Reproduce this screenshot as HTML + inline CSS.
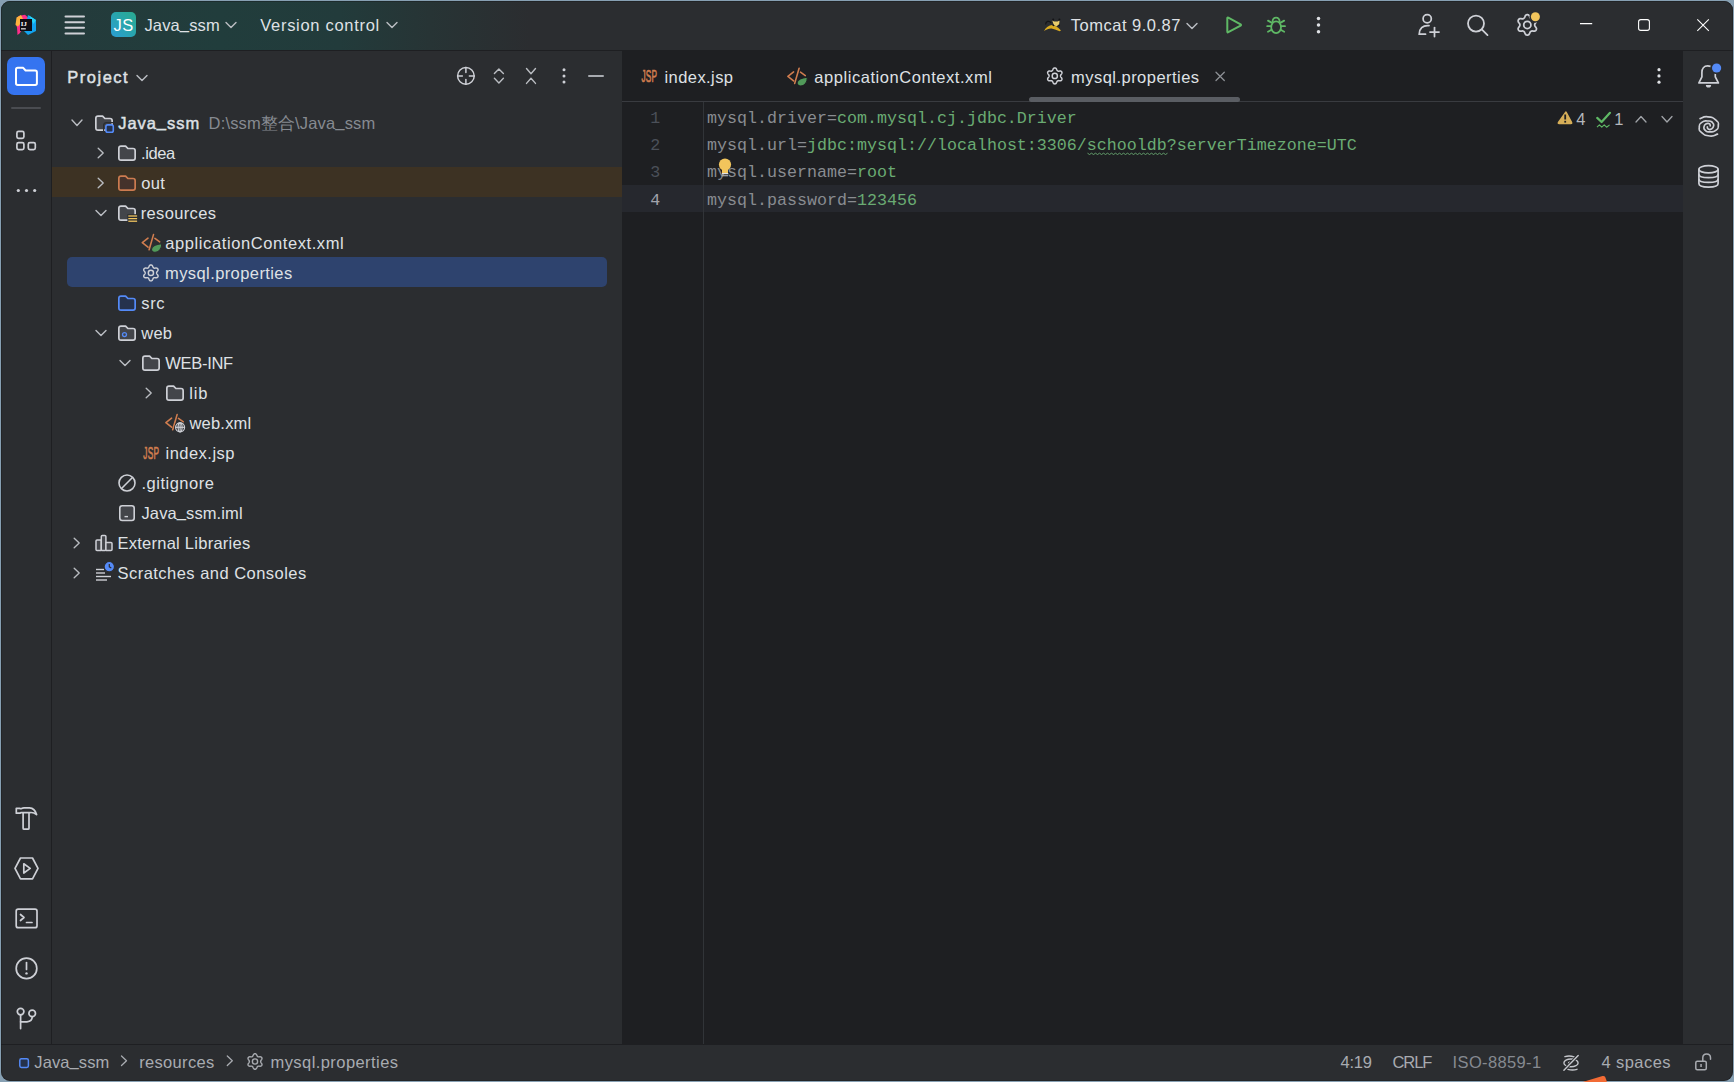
<!DOCTYPE html>
<html><head><meta charset="utf-8">
<style>
*{box-sizing:border-box}
html,body{margin:0;padding:0}
body{width:1734px;height:1082px;overflow:hidden;position:relative;background:#87a0b3;font-family:"Liberation Sans",sans-serif;color:#dfe1e5}
.a{position:absolute}
#win{position:absolute;left:0;top:0;width:1734px;height:1082px;clip-path:inset(1px 1px 1px 1px round 9px);background:#2b2d30}
.t{position:absolute;white-space:pre}
#ov{position:absolute;left:0;top:0}
</style></head>
<body>
<div id="win">
<div class="a" style="left:0;top:0;width:1734px;height:50px;background:linear-gradient(90deg,#253a3b 0px,#213d3c 220px,#223b3b 340px,#273435 430px,#2b2d30 530px)"></div>
<div class="a" style="left:0px;top:50px;width:1734px;height:1px;background:#1e1f22;border-radius:0px;"></div>
<div class="a" style="left:51px;top:51px;width:1px;height:993px;background:#1e1f22;border-radius:0px;"></div>
<div class="a" style="left:622px;top:51px;width:1061px;height:993px;background:#1e1f22;border-radius:0px;"></div>
<div class="a" style="left:0px;top:1044px;width:1734px;height:1px;background:#1e1f22;border-radius:0px;"></div>
<div class="a" style="left:111px;top:12px;width:25px;height:25px;border-radius:5px;background:linear-gradient(45deg,#2b9ed6 0%,#28a6a8 60%,#2aa98f 100%)"></div>
<div class="t" style="left:113.60px;top:14.28px;font-size:16.5px;line-height:22px;color:#ffffff;letter-spacing:0.3px;font-weight:normal;font-family:'Liberation Sans',sans-serif;">JS</div>
<div class="t" style="left:144.50px;top:14.28px;font-size:16.5px;line-height:22px;color:#dfe1e5;letter-spacing:0.12px;font-weight:normal;font-family:'Liberation Sans',sans-serif;">Java<span style="position:relative;top:-1.8px">_</span>ssm</div>
<div class="t" style="left:260.30px;top:14.28px;font-size:16.5px;line-height:22px;color:#dfe1e5;letter-spacing:0.7px;font-weight:normal;font-family:'Liberation Sans',sans-serif;">Version control</div>
<div class="t" style="left:1070.80px;top:14.28px;font-size:16.5px;line-height:22px;color:#dfe1e5;letter-spacing:0.5px;font-weight:normal;font-family:'Liberation Sans',sans-serif;">Tomcat 9.0.87</div>
<div class="a" style="left:7px;top:57px;width:38px;height:38px;background:#3574f0;border-radius:7px;"></div>
<div class="a" style="left:11px;top:107px;width:30px;height:2px;background:#4a4c51;border-radius:1px;"></div>
<div class="t" style="left:67.30px;top:65.68px;font-size:16.5px;line-height:22px;color:#dfe1e5;letter-spacing:1.5px;font-weight:normal;font-family:'Liberation Sans',sans-serif;-webkit-text-stroke:0.45px #dfe1e5;">Project</div>
<div class="a" style="left:588px;top:75px;width:16px;height:2px;background:#a8abb0;border-radius:1px;"></div>
<div class="a" style="left:52px;top:167px;width:570px;height:30px;background:#3d3223;border-radius:0px;"></div>
<div class="a" style="left:67px;top:257.4px;width:540px;height:30px;background:#2e436e;border-radius:5px;"></div>
<div class="t" style="left:118.20px;top:112.28px;font-size:16.5px;line-height:22px;color:#dfe1e5;letter-spacing:0.95px;font-weight:normal;font-family:'Liberation Sans',sans-serif;-webkit-text-stroke:0.45px #dfe1e5;">Java<span style="position:relative;top:-1.8px">_</span>ssm</div>
<div class="t" style="left:208.60px;top:112.28px;font-size:16.5px;line-height:22px;color:#868a91;letter-spacing:0.15px;font-weight:normal;font-family:'Liberation Sans',sans-serif;">D:\ssm整合\Java<span style="position:relative;top:-1.8px">_</span>ssm</div>
<div class="t" style="left:141.10px;top:142.28px;font-size:16.5px;line-height:22px;color:#dfe1e5;letter-spacing:-0.45px;font-weight:normal;font-family:'Liberation Sans',sans-serif;">.idea</div>
<div class="t" style="left:141.30px;top:172.28px;font-size:16.5px;line-height:22px;color:#dfe1e5;letter-spacing:0.3px;font-weight:normal;font-family:'Liberation Sans',sans-serif;">out</div>
<div class="t" style="left:140.70px;top:202.28px;font-size:16.5px;line-height:22px;color:#dfe1e5;letter-spacing:0.36px;font-weight:normal;font-family:'Liberation Sans',sans-serif;">resources</div>
<div class="t" style="left:165.30px;top:232.28px;font-size:16.5px;line-height:22px;color:#dfe1e5;letter-spacing:0.59px;font-weight:normal;font-family:'Liberation Sans',sans-serif;">applicationContext.xml</div>
<div class="t" style="left:165.00px;top:262.28px;font-size:16.5px;line-height:22px;color:#dfe1e5;letter-spacing:0.41px;font-weight:normal;font-family:'Liberation Sans',sans-serif;">mysql.properties</div>
<div class="t" style="left:141.30px;top:292.28px;font-size:16.5px;line-height:22px;color:#dfe1e5;letter-spacing:0.6px;font-weight:normal;font-family:'Liberation Sans',sans-serif;">src</div>
<div class="t" style="left:141.30px;top:322.28px;font-size:16.5px;line-height:22px;color:#dfe1e5;letter-spacing:0.2px;font-weight:normal;font-family:'Liberation Sans',sans-serif;">web</div>
<div class="t" style="left:165.30px;top:352.28px;font-size:16.5px;line-height:22px;color:#dfe1e5;letter-spacing:-0.3px;font-weight:normal;font-family:'Liberation Sans',sans-serif;">WEB-INF</div>
<div class="t" style="left:189.30px;top:382.28px;font-size:16.5px;line-height:22px;color:#dfe1e5;letter-spacing:0.8px;font-weight:normal;font-family:'Liberation Sans',sans-serif;">lib</div>
<div class="t" style="left:189.50px;top:412.28px;font-size:16.5px;line-height:22px;color:#dfe1e5;letter-spacing:0.2px;font-weight:normal;font-family:'Liberation Sans',sans-serif;">web.xml</div>
<div class="t" style="left:165.50px;top:442.28px;font-size:16.5px;line-height:22px;color:#dfe1e5;letter-spacing:0.48px;font-weight:normal;font-family:'Liberation Sans',sans-serif;">index.jsp</div>
<div class="t" style="left:141.50px;top:472.28px;font-size:16.5px;line-height:22px;color:#dfe1e5;letter-spacing:0.5px;font-weight:normal;font-family:'Liberation Sans',sans-serif;">.gitignore</div>
<div class="t" style="left:141.50px;top:502.28px;font-size:16.5px;line-height:22px;color:#dfe1e5;letter-spacing:0.1px;font-weight:normal;font-family:'Liberation Sans',sans-serif;">Java<span style="position:relative;top:-1.8px">_</span>ssm.iml</div>
<div class="t" style="left:117.50px;top:532.28px;font-size:16.5px;line-height:22px;color:#dfe1e5;letter-spacing:0.25px;font-weight:normal;font-family:'Liberation Sans',sans-serif;">External Libraries</div>
<div class="t" style="left:117.50px;top:562.28px;font-size:16.5px;line-height:22px;color:#dfe1e5;letter-spacing:0.47px;font-weight:normal;font-family:'Liberation Sans',sans-serif;">Scratches and Consoles</div>
<div class="a" style="left:622px;top:101px;width:1061px;height:1px;background:#393b40;border-radius:0px;"></div>
<div class="t" style="left:664.50px;top:65.88px;font-size:16.5px;line-height:22px;color:#dfe1e5;letter-spacing:0.42px;font-weight:normal;font-family:'Liberation Sans',sans-serif;">index.jsp</div>
<div class="t" style="left:814.30px;top:65.88px;font-size:16.5px;line-height:22px;color:#dfe1e5;letter-spacing:0.55px;font-weight:normal;font-family:'Liberation Sans',sans-serif;">applicationContext.xml</div>
<div class="t" style="left:1071.00px;top:65.88px;font-size:16.5px;line-height:22px;color:#dfe1e5;letter-spacing:0.47px;font-weight:normal;font-family:'Liberation Sans',sans-serif;">mysql.properties</div>
<div class="a" style="left:1029px;top:97px;width:211px;height:5px;background:#5a5d63;border-radius:2.5px;"></div>
<div class="a" style="left:622px;top:185px;width:1061px;height:27px;background:#26282e;border-radius:0px;"></div>
<div class="a" style="left:703px;top:102px;width:1px;height:942px;background:#313438;border-radius:0px;"></div>
<div class="t" style="left:650.20px;top:107.96px;font-size:16.667px;line-height:22px;color:#4b5059;letter-spacing:0px;font-weight:normal;font-family:'Liberation Mono',monospace;">1</div>
<div class="t" style="left:650.20px;top:134.96px;font-size:16.667px;line-height:22px;color:#4b5059;letter-spacing:0px;font-weight:normal;font-family:'Liberation Mono',monospace;">2</div>
<div class="t" style="left:650.20px;top:162.46px;font-size:16.667px;line-height:22px;color:#4b5059;letter-spacing:0px;font-weight:normal;font-family:'Liberation Mono',monospace;">3</div>
<div class="t" style="left:650.20px;top:189.96px;font-size:16.667px;line-height:22px;color:#a1a3ab;letter-spacing:0px;font-weight:normal;font-family:'Liberation Mono',monospace;">4</div>
<div class="t" style="left:707.00px;top:107.96px;font-size:16.667px;line-height:22px;color:#dfe1e5;letter-spacing:0px;font-weight:normal;font-family:'Liberation Mono',monospace;"><span style="color:#898c91">mysql.driver=</span><span style="color:#6aab73">com.mysql.cj.jdbc.Driver</span></div>
<div class="t" style="left:707.00px;top:134.96px;font-size:16.667px;line-height:22px;color:#dfe1e5;letter-spacing:0px;font-weight:normal;font-family:'Liberation Mono',monospace;"><span style="color:#898c91">mysql.url=</span><span style="color:#6aab73">jdbc:mysql://localhost:3306/schooldb?serverTimezone=UTC</span></div>
<div class="t" style="left:707.00px;top:162.46px;font-size:16.667px;line-height:22px;color:#dfe1e5;letter-spacing:0px;font-weight:normal;font-family:'Liberation Mono',monospace;"><span style="color:#898c91">mysql.username=</span><span style="color:#6aab73">root</span></div>
<div class="t" style="left:707.00px;top:189.96px;font-size:16.667px;line-height:22px;color:#dfe1e5;letter-spacing:0px;font-weight:normal;font-family:'Liberation Mono',monospace;"><span style="color:#898c91">mysql.password=</span><span style="color:#6aab73">123456</span></div>
<div class="t" style="left:1576.20px;top:108.28px;font-size:16.5px;line-height:22px;color:#b4b7bc;letter-spacing:0px;font-weight:normal;font-family:'Liberation Sans',sans-serif;">4</div>
<div class="t" style="left:1614.20px;top:108.28px;font-size:16.5px;line-height:22px;color:#b4b7bc;letter-spacing:0px;font-weight:normal;font-family:'Liberation Sans',sans-serif;">1</div>
<div class="t" style="left:34.30px;top:1050.88px;font-size:16.5px;line-height:22px;color:#a8abb0;letter-spacing:0.1px;font-weight:normal;font-family:'Liberation Sans',sans-serif;">Java<span style="position:relative;top:-1.8px">_</span>ssm</div>
<div class="t" style="left:139.20px;top:1050.88px;font-size:16.5px;line-height:22px;color:#a8abb0;letter-spacing:0.32px;font-weight:normal;font-family:'Liberation Sans',sans-serif;">resources</div>
<div class="t" style="left:270.50px;top:1050.88px;font-size:16.5px;line-height:22px;color:#a8abb0;letter-spacing:0.43px;font-weight:normal;font-family:'Liberation Sans',sans-serif;">mysql.properties</div>
<div class="t" style="left:1340.50px;top:1050.88px;font-size:16.5px;line-height:22px;color:#a8abb0;letter-spacing:-0.2px;font-weight:normal;font-family:'Liberation Sans',sans-serif;">4:19</div>
<div class="t" style="left:1392.50px;top:1050.88px;font-size:16.5px;line-height:22px;color:#a8abb0;letter-spacing:-1.1px;font-weight:normal;font-family:'Liberation Sans',sans-serif;">CRLF</div>
<div class="t" style="left:1452.60px;top:1050.88px;font-size:16.5px;line-height:22px;color:#868a91;letter-spacing:0.36px;font-weight:normal;font-family:'Liberation Sans',sans-serif;">ISO-8859-1</div>
<div class="t" style="left:1601.50px;top:1050.88px;font-size:16.5px;line-height:22px;color:#a8abb0;letter-spacing:0.42px;font-weight:normal;font-family:'Liberation Sans',sans-serif;">4 spaces</div>
<svg id="ov" width="1734" height="1082" viewBox="0 0 1734 1082">
<g>
 <polygon points="18.5,16 25,14.8 29,18.5 24,27 19.5,33.5 17.5,35 17,27.5 15.8,23.5" fill="#fe2e88"/>
 <polygon points="16.5,17.5 21,15 23.5,20 18,26.5 15.5,25" fill="#ffb23e"/>
 <polygon points="28,15 36,20 36,31 28,35 24,31" fill="#12a4f0"/>
 <polygon points="29,15.5 36,20 33.5,24" fill="#26d3f7"/>
 <rect x="20" y="19" width="12" height="12" fill="#0f0d14"/>
 <text x="20.8" y="25.6" font-family="Liberation Serif" font-weight="bold" font-size="6.8" fill="#ffffff">IJ</text>
 <rect x="21" y="28.3" width="4.8" height="1.1" fill="#ffffff"/>
</g>
<g stroke="#ced0d6" stroke-width="2" stroke-linecap="round"><line x1="65.5" y1="16.6" x2="84" y2="16.6"/><line x1="65.5" y1="22.2" x2="84" y2="22.2"/><line x1="65.5" y1="27.8" x2="84" y2="27.8"/><line x1="65.5" y1="33.5" x2="84" y2="33.5"/></g>
<polyline points="226.00,22.40 231.00,27.60 236.00,22.40" fill="none" stroke="#b9bcc1" stroke-width="1.4" stroke-linecap="round" stroke-linejoin="round"/>
<polyline points="387.00,22.40 392.00,27.60 397.00,22.40" fill="none" stroke="#b9bcc1" stroke-width="1.4" stroke-linecap="round" stroke-linejoin="round"/>
<path d="M1045.6,24.5 C1045.8,21 1049,20.3 1051.2,22.8" fill="none" stroke="#141417" stroke-width="1.3"/>
<path d="M1044,31 C1045.8,27.2 1049,25.2 1052.2,25 L1055,25.8 C1057.3,27 1059.3,28.6 1061,30.6 L1059.6,31.2 C1057.2,30.2 1054.5,29.3 1051.5,28.6 C1049.2,28.4 1046.6,29.6 1044,31 Z" fill="#d9aa20"/>
<path d="M1052.3,20.6 L1054,21.6 L1057.6,21.6 L1059.6,20.6 L1059.1,24.2 L1056.3,26.6 L1053.6,24.6 Z" fill="#e8cd6c"/>
<g fill="#141417"><circle cx="1053.2" cy="19.6" r="1"/><circle cx="1059.4" cy="19.6" r="1"/><circle cx="1053.3" cy="25.4" r="0.8"/><circle cx="1059.2" cy="25.6" r="0.8"/></g>
<polyline points="1187.00,23.40 1192.00,28.60 1197.00,23.40" fill="none" stroke="#b9bcc1" stroke-width="1.4" stroke-linecap="round" stroke-linejoin="round"/>
<path d="M1227.3,18.3 Q1227.3,17.2 1228.3,17.7 L1240.6,24.3 Q1241.5,25 1240.6,25.6 L1228.3,32.2 Q1227.3,32.8 1227.3,31.6 Z" fill="none" stroke="#5fb865" stroke-width="2" stroke-linejoin="round"/>
<g fill="none" stroke="#5fb865" stroke-width="1.8" stroke-linecap="round">
 <ellipse cx="1276.1" cy="27.2" rx="4.9" ry="5.9"/>
 <path d="M1272.6,21.6 C1272.2,16.2 1279.9,16.2 1279.6,21.6"/>
 <line x1="1267.2" y1="26.2" x2="1271" y2="26.2"/><line x1="1281.2" y1="26.2" x2="1285" y2="26.2"/>
 <line x1="1268" y1="20.6" x2="1271.5" y2="22.6"/><line x1="1284.2" y1="20.6" x2="1280.7" y2="22.6"/>
 <line x1="1268" y1="31.8" x2="1271.5" y2="29.8"/><line x1="1284.2" y1="31.8" x2="1280.7" y2="29.8"/>
</g>
<g fill="#dfe1e5"><circle cx="1318.5" cy="18.4" r="1.75"/><circle cx="1318.5" cy="25" r="1.75"/><circle cx="1318.5" cy="31.7" r="1.75"/></g>
<g fill="none" stroke="#ced0d6" stroke-width="1.75" stroke-linecap="round">
 <circle cx="1427.2" cy="18.7" r="4.1"/>
 <path d="M1429,25.6 C1422.5,25 1419.2,29 1419.2,34.2 L1425.5,34.2"/>
 <line x1="1434.5" y1="27.5" x2="1434.5" y2="36.5"/><line x1="1430" y1="32" x2="1439" y2="32"/>
</g>
<g fill="none" stroke="#ced0d6" stroke-width="1.8" stroke-linecap="round"><circle cx="1476" cy="23.6" r="8"/><line x1="1482" y1="29.6" x2="1487.5" y2="35.1"/></g>
<g fill="none" stroke="#ced0d6" stroke-width="1.75"><path d="M1534.70,24.90 L1534.71,25.16 L1534.75,25.42 L1534.81,25.69 L1534.93,25.97 L1535.10,26.28 L1535.35,26.61 L1535.64,26.98 L1535.95,27.38 L1536.21,27.80 L1536.39,28.21 L1536.48,28.61 L1536.48,28.99 L1536.41,29.34 L1536.29,29.68 L1536.13,30.00 L1535.94,30.30 L1535.70,30.57 L1535.43,30.80 L1535.10,30.99 L1534.71,31.12 L1534.27,31.17 L1533.77,31.15 L1533.27,31.09 L1532.81,31.01 L1532.39,30.97 L1532.04,30.97 L1531.74,31.01 L1531.47,31.09 L1531.23,31.19 L1531.00,31.31 L1530.78,31.45 L1530.57,31.61 L1530.37,31.80 L1530.19,32.04 L1530.01,32.35 L1529.84,32.72 L1529.67,33.17 L1529.48,33.63 L1529.25,34.07 L1528.98,34.43 L1528.68,34.70 L1528.35,34.89 L1528.01,35.01 L1527.66,35.08 L1527.30,35.10 L1526.94,35.08 L1526.59,35.01 L1526.25,34.89 L1525.92,34.70 L1525.62,34.43 L1525.35,34.07 L1525.12,33.63 L1524.93,33.17 L1524.76,32.72 L1524.59,32.35 L1524.41,32.04 L1524.23,31.80 L1524.03,31.61 L1523.82,31.45 L1523.60,31.31 L1523.37,31.19 L1523.13,31.09 L1522.86,31.01 L1522.56,30.97 L1522.21,30.97 L1521.79,31.01 L1521.33,31.09 L1520.83,31.15 L1520.33,31.17 L1519.89,31.12 L1519.50,30.99 L1519.17,30.80 L1518.90,30.57 L1518.66,30.30 L1518.47,30.00 L1518.31,29.68 L1518.19,29.34 L1518.12,28.99 L1518.12,28.61 L1518.21,28.21 L1518.39,27.80 L1518.65,27.38 L1518.96,26.98 L1519.25,26.61 L1519.50,26.28 L1519.67,25.97 L1519.79,25.69 L1519.85,25.42 L1519.89,25.16 L1519.90,24.90 L1519.89,24.64 L1519.85,24.38 L1519.79,24.11 L1519.67,23.83 L1519.50,23.52 L1519.25,23.19 L1518.96,22.82 L1518.65,22.42 L1518.39,22.00 L1518.21,21.59 L1518.12,21.19 L1518.12,20.81 L1518.19,20.46 L1518.31,20.12 L1518.47,19.80 L1518.66,19.50 L1518.90,19.23 L1519.17,19.00 L1519.50,18.81 L1519.89,18.68 L1520.33,18.63 L1520.83,18.65 L1521.33,18.71 L1521.79,18.79 L1522.21,18.83 L1522.56,18.83 L1522.86,18.79 L1523.13,18.71 L1523.37,18.61 L1523.60,18.49 L1523.82,18.35 L1524.03,18.19 L1524.23,18.00 L1524.41,17.76 L1524.59,17.45 L1524.76,17.08 L1524.93,16.63 L1525.12,16.17 L1525.35,15.73 L1525.62,15.37 L1525.92,15.10 L1526.25,14.91 L1526.59,14.79 L1526.94,14.72 L1527.30,14.70 L1527.66,14.72 L1528.01,14.79 L1528.35,14.91 L1528.68,15.10 L1528.98,15.37 L1529.25,15.73 L1529.48,16.17 L1529.67,16.63 L1529.84,17.08 L1530.01,17.45 L1530.19,17.76 L1530.37,18.00 L1530.57,18.19 L1530.78,18.35 L1531.00,18.49 L1531.23,18.61 L1531.47,18.71 L1531.74,18.79 L1532.04,18.83 L1532.39,18.83 L1532.81,18.79 L1533.27,18.71 L1533.77,18.65 L1534.27,18.63 L1534.71,18.68 L1535.10,18.81 L1535.43,19.00 L1535.70,19.23 L1535.94,19.50 L1536.13,19.80 L1536.29,20.12 L1536.41,20.46 L1536.48,20.81 L1536.48,21.19 L1536.39,21.59 L1536.21,22.00 L1535.95,22.42 L1535.64,22.82 L1535.35,23.19 L1535.10,23.52 L1534.93,23.83 L1534.81,24.11 L1534.75,24.38 L1534.71,24.64 Z"/><circle cx="1527.3" cy="24.9" r="3.6"/></g>
<circle cx="1535.4" cy="16.7" r="6" fill="#2b2d30"/><circle cx="1535.4" cy="16.7" r="4.5" fill="#f2c55c"/>
<g fill="none" stroke="#ffffff" stroke-width="1.1">
 <line x1="1580" y1="23.6" x2="1592.2" y2="23.6"/>
 <rect x="1638.6" y="19.6" width="10.8" height="10.8" rx="2.2"/>
 <line x1="1697.3" y1="19.3" x2="1708.8" y2="30.8"/><line x1="1708.8" y1="19.3" x2="1697.3" y2="30.8"/>
</g>
<path d="M16,69.5 Q16,67.8 17.7,67.8 L23.2,67.8 L25.6,70.5 L35.2,70.5 Q36.9,70.5 36.9,72.2 L36.9,83.2 Q36.9,84.9 35.2,84.9 L17.7,84.9 Q16,84.9 16,83.2 Z" fill="none" stroke="#ffffff" stroke-width="2" stroke-linejoin="round"/>
<g fill="none" stroke="#ced0d6" stroke-width="1.7">
 <rect x="16.9" y="131.4" width="7" height="7" rx="1.6"/>
 <rect x="16.9" y="142.6" width="7" height="7" rx="1.6"/>
 <rect x="28.3" y="142.6" width="7" height="7" rx="1.6"/>
</g>
<g fill="#ced0d6"><circle cx="18.3" cy="190.5" r="1.6"/><circle cx="26.5" cy="190.5" r="1.6"/><circle cx="34.7" cy="190.5" r="1.6"/></g>
<g fill="none" stroke="#ced0d6" stroke-width="1.7" stroke-linejoin="round" stroke-linecap="round">
 <path d="M16.3,808.3 L19.8,808.3 Q20.6,809 21.6,808.4 Q22.6,807.9 24,807.9 L29.5,807.9 Q34.8,808.2 36.6,814.6 Q33.5,812 29.8,812.6 L20.8,812.6 Q20.2,813.2 19.5,813.2 L16.3,813.2 Z"/>
 <path d="M23.1,812.8 L23.1,828.2 Q23.1,829.2 24.1,829.2 L28,829.2 Q29,829.2 29,828.2 L29,812.8"/>
 <path d="M20.5,858 L32.5,858 L38,868.4 L32.5,878.8 L20.5,878.8 L15,868.4 Z"/>
 <path d="M23.8,863.8 L30.2,868.4 L23.8,873 Z"/>
 <rect x="16.2" y="909.2" width="20.8" height="18.5" rx="2"/>
 <polyline points="20.5,914.5 24,917.5 20.5,920.5"/>
 <line x1="26.5" y1="922.5" x2="32" y2="922.5"/>
 <circle cx="26.5" cy="968.4" r="10.3"/>
 <line x1="26.5" y1="962.5" x2="26.5" y2="969.5"/>
</g>
<circle cx="26.5" cy="973.4" r="1.2" fill="#ced0d6"/>
<g fill="none" stroke="#ced0d6" stroke-width="1.7" stroke-linecap="round">
 <circle cx="20.6" cy="1011.6" r="3.3"/>
 <circle cx="32.2" cy="1013.4" r="3.3"/>
 <line x1="20.6" y1="1015" x2="20.6" y2="1028.6"/>
 <path d="M32.2,1016.8 Q32.2,1021.5 27,1021.8 L20.6,1021.8"/>
</g>
<polyline points="137.00,75.40 142.00,80.60 147.00,75.40" fill="none" stroke="#b9bcc1" stroke-width="1.4" stroke-linecap="round" stroke-linejoin="round"/>
<g fill="none" stroke="#ced0d6" stroke-width="1.5" stroke-linecap="round">
 <circle cx="465.9" cy="75.9" r="8.3"/>
 <line x1="465.9" y1="67.6" x2="465.9" y2="72.4"/><line x1="465.9" y1="79.4" x2="465.9" y2="84.2"/>
 <line x1="457.6" y1="75.9" x2="462.4" y2="75.9"/><line x1="469.4" y1="75.9" x2="474.2" y2="75.9"/>
</g>
<polyline points="494.40,73.60 498.90,69.00 503.40,73.60" fill="none" stroke="#b9bcc1" stroke-width="1.4" stroke-linecap="round" stroke-linejoin="round"/>
<polyline points="494.40,78.30 498.90,82.90 503.40,78.30" fill="none" stroke="#b9bcc1" stroke-width="1.4" stroke-linecap="round" stroke-linejoin="round"/>
<polyline points="526.50,68.50 531.00,73.70 535.50,68.50" fill="none" stroke="#b9bcc1" stroke-width="1.4" stroke-linecap="round" stroke-linejoin="round"/>
<polyline points="526.50,83.40 531.00,78.20 535.50,83.40" fill="none" stroke="#b9bcc1" stroke-width="1.4" stroke-linecap="round" stroke-linejoin="round"/>
<g fill="#ced0d6"><circle cx="564" cy="69.7" r="1.5"/><circle cx="564" cy="75.9" r="1.5"/><circle cx="564" cy="82.1" r="1.5"/></g>
<polyline points="72.00,120.05 77.00,125.55 82.00,120.05" fill="none" stroke="#b9bcc1" stroke-width="1.4" stroke-linecap="round" stroke-linejoin="round"/>
<path transform="translate(95.00,115.20)" d="M0.85,3 Q0.85,0.85 3,0.85 L7.6,0.85 L9.9,3.3 L15,3.3 Q17.15,3.3 17.15,5.5 L17.15,12.7 Q17.15,14.85 15,14.85 L3,14.85 Q0.85,14.85 0.85,12.7 Z" fill="#43454a" stroke="#ced0d6" stroke-width="1.7" stroke-linejoin="round"/>
<rect x="105.9" y="124.9" width="7.4" height="7.4" rx="1.8" fill="#25324d" stroke="#548af7" stroke-width="1.6"/>
<rect x="103.6" y="122.6" width="12" height="12" rx="3" fill="none" stroke="#2b2d30" stroke-width="1.2"/>
<polyline points="98.20,148.30 103.20,153.00 98.20,157.70" fill="none" stroke="#b9bcc1" stroke-width="1.4" stroke-linecap="round" stroke-linejoin="round"/>
<path transform="translate(118.00,145.20)" d="M0.85,3 Q0.85,0.85 3,0.85 L7.6,0.85 L9.9,3.3 L15,3.3 Q17.15,3.3 17.15,5.5 L17.15,12.7 Q17.15,14.85 15,14.85 L3,14.85 Q0.85,14.85 0.85,12.7 Z" fill="#43454a" stroke="#ced0d6" stroke-width="1.7" stroke-linejoin="round"/>
<polyline points="98.20,178.30 103.20,183.00 98.20,187.70" fill="none" stroke="#b9bcc1" stroke-width="1.4" stroke-linecap="round" stroke-linejoin="round"/>
<path transform="translate(118.00,175.20)" d="M0.85,3 Q0.85,0.85 3,0.85 L7.6,0.85 L9.9,3.3 L15,3.3 Q17.15,3.3 17.15,5.5 L17.15,12.7 Q17.15,14.85 15,14.85 L3,14.85 Q0.85,14.85 0.85,12.7 Z" fill="#45322b" stroke="#cc7b50" stroke-width="1.7" stroke-linejoin="round"/>
<polyline points="96.00,210.40 101.00,215.60 106.00,210.40" fill="none" stroke="#b9bcc1" stroke-width="1.4" stroke-linecap="round" stroke-linejoin="round"/>
<path transform="translate(118.00,205.20)" d="M0.85,3 Q0.85,0.85 3,0.85 L7.6,0.85 L9.9,3.3 L15,3.3 Q17.15,3.3 17.15,5.5 L17.15,12.7 Q17.15,14.85 15,14.85 L3,14.85 Q0.85,14.85 0.85,12.7 Z" fill="#43454a" stroke="#ced0d6" stroke-width="1.7" stroke-linejoin="round"/>
<rect x="127.4" y="214.2" width="11" height="9.5" fill="#2b2d30"/>
<g stroke-width="1.45"><line x1="128.3" y1="216" x2="137.1" y2="216" stroke="#d4ae58"/><line x1="128.3" y1="218.6" x2="137.1" y2="218.6" stroke="#f2c55c"/><line x1="128.3" y1="221.2" x2="137.1" y2="221.2" stroke="#d4ae58"/></g>
<g fill="none" stroke="#d07d4f" stroke-width="1.6" stroke-linecap="round" stroke-linejoin="round"><polyline points="148.00,238.20 142.30,242.70 148.00,247.20"/><line x1="153.50" y1="234.60" x2="149.10" y2="249.70"/><polyline points="154.90,238.40 159.70,241.90"/></g>
<path d="M161.70,243.60 C162.00,249.70 158.40,252.30 155.20,252.30 C152.60,252.30 151.30,250.70 151.50,249.10 C151.90,245.70 155.90,244.30 161.70,243.60 Z" fill="#519a5a" stroke="#2b2d30" stroke-width="1.1"/>
<g fill="none" stroke="#ced0d6" stroke-width="1.45" stroke-linejoin="round"><path d="M156.60,272.90 L156.63,273.20 L156.72,273.51 L156.90,273.85 L157.17,274.23 L157.52,274.67 L157.83,275.15 L158.02,275.63 L158.07,276.09 L158.00,276.52 L157.83,276.90 L157.58,277.24 L157.25,277.51 L156.83,277.70 L156.31,277.77 L155.74,277.74 L155.19,277.67 L154.72,277.62 L154.34,277.63 L154.02,277.71 L153.75,277.84 L153.50,278.01 L153.28,278.25 L153.08,278.57 L152.88,279.00 L152.67,279.52 L152.41,280.03 L152.09,280.43 L151.72,280.71 L151.32,280.85 L150.90,280.90 L150.48,280.85 L150.08,280.71 L149.71,280.43 L149.39,280.03 L149.13,279.52 L148.92,279.00 L148.72,278.57 L148.52,278.25 L148.30,278.01 L148.05,277.84 L147.78,277.71 L147.46,277.63 L147.08,277.62 L146.61,277.67 L146.06,277.74 L145.49,277.77 L144.97,277.70 L144.55,277.51 L144.22,277.24 L143.97,276.90 L143.80,276.52 L143.73,276.09 L143.78,275.63 L143.97,275.15 L144.28,274.67 L144.63,274.23 L144.90,273.85 L145.08,273.51 L145.17,273.20 L145.20,272.90 L145.17,272.60 L145.08,272.29 L144.90,271.95 L144.63,271.57 L144.28,271.13 L143.97,270.65 L143.78,270.17 L143.73,269.71 L143.80,269.28 L143.97,268.90 L144.22,268.56 L144.55,268.29 L144.97,268.10 L145.49,268.03 L146.06,268.06 L146.61,268.13 L147.08,268.18 L147.46,268.17 L147.78,268.09 L148.05,267.96 L148.30,267.79 L148.52,267.55 L148.72,267.23 L148.92,266.80 L149.13,266.28 L149.39,265.77 L149.71,265.37 L150.08,265.09 L150.48,264.95 L150.90,264.90 L151.32,264.95 L151.72,265.09 L152.09,265.37 L152.41,265.77 L152.67,266.28 L152.88,266.80 L153.08,267.23 L153.28,267.55 L153.50,267.79 L153.75,267.96 L154.02,268.09 L154.34,268.17 L154.72,268.18 L155.19,268.13 L155.74,268.06 L156.31,268.03 L156.83,268.10 L157.25,268.29 L157.58,268.56 L157.83,268.90 L158.00,269.28 L158.07,269.71 L158.02,270.17 L157.83,270.65 L157.52,271.13 L157.17,271.57 L156.90,271.95 L156.72,272.29 L156.63,272.60 Z"/><circle cx="150.9" cy="272.9" r="2.6"/></g>
<path transform="translate(118.00,295.20)" d="M0.85,3 Q0.85,0.85 3,0.85 L7.6,0.85 L9.9,3.3 L15,3.3 Q17.15,3.3 17.15,5.5 L17.15,12.7 Q17.15,14.85 15,14.85 L3,14.85 Q0.85,14.85 0.85,12.7 Z" fill="#25324d" stroke="#548af7" stroke-width="1.7" stroke-linejoin="round"/>
<polyline points="96.00,330.40 101.00,335.60 106.00,330.40" fill="none" stroke="#b9bcc1" stroke-width="1.4" stroke-linecap="round" stroke-linejoin="round"/>
<path transform="translate(118.00,325.20)" d="M0.85,3 Q0.85,0.85 3,0.85 L7.6,0.85 L9.9,3.3 L15,3.3 Q17.15,3.3 17.15,5.5 L17.15,12.7 Q17.15,14.85 15,14.85 L3,14.85 Q0.85,14.85 0.85,12.7 Z" fill="#43454a" stroke="#ced0d6" stroke-width="1.7" stroke-linejoin="round"/>
<circle cx="124.5" cy="334.6" r="2" fill="none" stroke="#548af7" stroke-width="1.3"/>
<polyline points="120.00,360.40 125.00,365.60 130.00,360.40" fill="none" stroke="#b9bcc1" stroke-width="1.4" stroke-linecap="round" stroke-linejoin="round"/>
<path transform="translate(142.00,355.20)" d="M0.85,3 Q0.85,0.85 3,0.85 L7.6,0.85 L9.9,3.3 L15,3.3 Q17.15,3.3 17.15,5.5 L17.15,12.7 Q17.15,14.85 15,14.85 L3,14.85 Q0.85,14.85 0.85,12.7 Z" fill="#43454a" stroke="#ced0d6" stroke-width="1.7" stroke-linejoin="round"/>
<polyline points="146.20,388.30 151.20,393.00 146.20,397.70" fill="none" stroke="#b9bcc1" stroke-width="1.4" stroke-linecap="round" stroke-linejoin="round"/>
<path transform="translate(166.00,385.20)" d="M0.85,3 Q0.85,0.85 3,0.85 L7.6,0.85 L9.9,3.3 L15,3.3 Q17.15,3.3 17.15,5.5 L17.15,12.7 Q17.15,14.85 15,14.85 L3,14.85 Q0.85,14.85 0.85,12.7 Z" fill="#43454a" stroke="#ced0d6" stroke-width="1.7" stroke-linejoin="round"/>
<g fill="none" stroke="#d07d4f" stroke-width="1.6" stroke-linecap="round" stroke-linejoin="round"><polyline points="171.60,418.20 165.90,422.70 171.60,427.20"/><line x1="177.10" y1="414.60" x2="172.70" y2="429.70"/><polyline points="178.50,418.40 183.30,421.90"/></g>
<circle cx="180.10" cy="427.30" r="5.8" fill="#2b2d30"/><g fill="none" stroke="#ced0d6" stroke-width="1.2"><circle cx="180.10" cy="427.30" r="4.5"/><line x1="175.60" y1="427.30" x2="184.60" y2="427.30"/><line x1="180.10" y1="422.80" x2="180.10" y2="431.80"/><ellipse cx="180.10" cy="427.30" rx="2" ry="4.5"/></g>
<text transform="translate(143.30,458.70) scale(0.5,1)" font-family="Liberation Sans" font-size="16.5" fill="#d07d4f" stroke="#d07d4f" stroke-width="0.7" letter-spacing="0.6">JSP</text>
<g fill="none" stroke="#ced0d6" stroke-width="1.6"><circle cx="127" cy="483" r="8"/><line x1="121.8" y1="488.2" x2="132.2" y2="477.8"/></g>
<rect x="119.8" y="505.7" width="14.4" height="14.8" rx="2.4" fill="#43454a" stroke="#ced0d6" stroke-width="1.6"/><line x1="124.5" y1="516.6" x2="128" y2="516.6" stroke="#ced0d6" stroke-width="1.4"/>
<polyline points="74.20,538.30 79.20,543.00 74.20,547.70" fill="none" stroke="#b9bcc1" stroke-width="1.4" stroke-linecap="round" stroke-linejoin="round"/>
<g fill="#43454a" stroke="#ced0d6" stroke-width="1.5" stroke-linejoin="round"><path d="M97,540 L101.3,540 L101.3,550.5 L97,550.5 Q96,550.5 96,549.5 L96,541 Q96,540 97,540 Z"/><rect x="101.3" y="535.5" width="4.6" height="15" rx="1"/><path d="M105.9,542.5 L111,542.5 Q112,542.5 112,543.5 L112,549.5 Q112,550.5 111,550.5 L105.9,550.5 Z"/></g>
<polyline points="74.20,568.30 79.20,573.00 74.20,577.70" fill="none" stroke="#b9bcc1" stroke-width="1.4" stroke-linecap="round" stroke-linejoin="round"/>
<g stroke="#ced0d6" stroke-width="1.4"><line x1="96" y1="569.5" x2="104" y2="569.5"/><line x1="96" y1="573" x2="105" y2="573"/><line x1="96" y1="576.5" x2="111" y2="576.5"/><line x1="96" y1="580" x2="107" y2="580"/></g>
<circle cx="109.3" cy="566.7" r="5.2" fill="#548af7" stroke="#2b2d30" stroke-width="1.2"/><polyline points="109.3,564 109.3,566.9 111.3,568" fill="none" stroke="#2b2d30" stroke-width="1.2"/>
<text transform="translate(641.40,82.30) scale(0.5,1)" font-family="Liberation Sans" font-size="16.5" fill="#d07d4f" stroke="#d07d4f" stroke-width="0.7" letter-spacing="0.6">JSP</text>
<g fill="none" stroke="#d07d4f" stroke-width="1.6" stroke-linecap="round" stroke-linejoin="round"><polyline points="793.60,71.90 787.90,76.40 793.60,80.90"/><line x1="799.10" y1="68.30" x2="794.70" y2="83.40"/><polyline points="800.50,72.10 805.30,75.60"/></g>
<path d="M807.30,77.30 C807.60,83.40 804.00,86.00 800.80,86.00 C798.20,86.00 796.90,84.40 797.10,82.80 C797.50,79.40 801.50,78.00 807.30,77.30 Z" fill="#519a5a" stroke="#1e1f22" stroke-width="1.1"/>
<g fill="none" stroke="#ced0d6" stroke-width="1.5"><path d="M1060.50,75.90 L1060.53,76.20 L1060.62,76.51 L1060.80,76.85 L1061.07,77.23 L1061.42,77.67 L1061.73,78.15 L1061.92,78.63 L1061.97,79.09 L1061.90,79.52 L1061.73,79.90 L1061.48,80.24 L1061.15,80.51 L1060.73,80.70 L1060.21,80.77 L1059.64,80.74 L1059.09,80.67 L1058.62,80.62 L1058.24,80.63 L1057.92,80.71 L1057.65,80.84 L1057.40,81.01 L1057.18,81.25 L1056.98,81.57 L1056.78,82.00 L1056.57,82.52 L1056.31,83.03 L1055.99,83.43 L1055.62,83.71 L1055.22,83.85 L1054.80,83.90 L1054.38,83.85 L1053.98,83.71 L1053.61,83.43 L1053.29,83.03 L1053.03,82.52 L1052.82,82.00 L1052.62,81.57 L1052.42,81.25 L1052.20,81.01 L1051.95,80.84 L1051.68,80.71 L1051.36,80.63 L1050.98,80.62 L1050.51,80.67 L1049.96,80.74 L1049.39,80.77 L1048.87,80.70 L1048.45,80.51 L1048.12,80.24 L1047.87,79.90 L1047.70,79.52 L1047.63,79.09 L1047.68,78.63 L1047.87,78.15 L1048.18,77.67 L1048.53,77.23 L1048.80,76.85 L1048.98,76.51 L1049.07,76.20 L1049.10,75.90 L1049.07,75.60 L1048.98,75.29 L1048.80,74.95 L1048.53,74.57 L1048.18,74.13 L1047.87,73.65 L1047.68,73.17 L1047.63,72.71 L1047.70,72.28 L1047.87,71.90 L1048.12,71.56 L1048.45,71.29 L1048.87,71.10 L1049.39,71.03 L1049.96,71.06 L1050.51,71.13 L1050.98,71.18 L1051.36,71.17 L1051.68,71.09 L1051.95,70.96 L1052.20,70.79 L1052.42,70.55 L1052.62,70.23 L1052.82,69.80 L1053.03,69.28 L1053.29,68.77 L1053.61,68.37 L1053.98,68.09 L1054.38,67.95 L1054.80,67.90 L1055.22,67.95 L1055.62,68.09 L1055.99,68.37 L1056.31,68.77 L1056.57,69.28 L1056.78,69.80 L1056.98,70.23 L1057.18,70.55 L1057.40,70.79 L1057.65,70.96 L1057.92,71.09 L1058.24,71.17 L1058.62,71.18 L1059.09,71.13 L1059.64,71.06 L1060.21,71.03 L1060.73,71.10 L1061.15,71.29 L1061.48,71.56 L1061.73,71.90 L1061.90,72.28 L1061.97,72.71 L1061.92,73.17 L1061.73,73.65 L1061.42,74.13 L1061.07,74.57 L1060.80,74.95 L1060.62,75.29 L1060.53,75.60 Z"/><circle cx="1054.8" cy="75.9" r="2.6"/></g>
<g stroke="#8c8f94" stroke-width="1.3" stroke-linecap="round"><line x1="1216" y1="72.2" x2="1224.3" y2="80.5"/><line x1="1224.3" y1="72.2" x2="1216" y2="80.5"/></g>
<g fill="#dfe1e5"><circle cx="1659" cy="69.7" r="1.6"/><circle cx="1659" cy="75.9" r="1.6"/><circle cx="1659" cy="82.2" r="1.6"/></g>
<path d="M1087.5,153.2 L1089.5,154.5 L1091.5,153.2 L1093.5,154.5 L1095.5,153.2 L1097.5,154.5 L1099.5,153.2 L1101.5,154.5 L1103.5,153.2 L1105.5,154.5 L1107.5,153.2 L1109.5,154.5 L1111.5,153.2 L1113.5,154.5 L1115.5,153.2 L1117.5,154.5 L1119.5,153.2 L1121.5,154.5 L1123.5,153.2 L1125.5,154.5 L1127.5,153.2 L1129.5,154.5 L1131.5,153.2 L1133.5,154.5 L1135.5,153.2 L1137.5,154.5 L1139.5,153.2 L1141.5,154.5 L1143.5,153.2 L1145.5,154.5 L1147.5,153.2 L1149.5,154.5 L1151.5,153.2 L1153.5,154.5 L1155.5,153.2 L1157.5,154.5 L1159.5,153.2 L1161.5,154.5 L1163.5,153.2 L1165.5,154.5 L1167.5,153.2" fill="none" stroke="#6aab73" stroke-width="0.9"/>
<g><circle cx="725" cy="164.6" r="6.1" fill="#f2c55c"/><rect x="722" y="168" width="6" height="5" fill="#f2c55c"/><line x1="722" y1="173.6" x2="728.3" y2="173.6" stroke="#dfe1e5" stroke-width="1.3"/><line x1="722.3" y1="175.8" x2="728" y2="175.8" stroke="#c0c2c6" stroke-width="1.1"/></g>
<path d="M1565,112 Q1565.9,110.6 1566.8,112 L1572.3,122.3 Q1573,124.2 1571,124.2 L1559,124.2 Q1557,124.2 1557.7,122.3 Z" fill="#d6ae58"/>
<rect x="1564.3" y="114.5" width="1.8" height="5" fill="#1e1f22"/><rect x="1564.3" y="120.8" width="1.8" height="1.8" fill="#1e1f22"/>
<polyline points="1597.2,117.9 1601.6,122 1610,112.8" fill="none" stroke="#5fb865" stroke-width="2.2" stroke-linecap="round" stroke-linejoin="round"/>
<polyline points="1597,127.2 1599.4,124.9 1601.8,127.2 1604.2,124.9 1606.6,127.2 1609.6,124.9" fill="none" stroke="#5fb865" stroke-width="1.1" stroke-linejoin="round"/>
<polyline points="1636.00,121.95 1641.00,116.45 1646.00,121.95" fill="none" stroke="#a0a3a8" stroke-width="1.3" stroke-linecap="round" stroke-linejoin="round"/>
<polyline points="1662.00,116.45 1667.00,121.95 1672.00,116.45" fill="none" stroke="#a0a3a8" stroke-width="1.3" stroke-linecap="round" stroke-linejoin="round"/>
<path d="M1710.9,66.5 C1709.8,66.1 1708.7,65.9 1707.6,65.9 C1704,65.9 1701.9,68.8 1701.9,72.4 L1701.9,76.8 L1698.9,82.9 L1718.4,82.9 L1715.3,76.8 L1715.3,73.6" fill="none" stroke="#ced0d6" stroke-width="1.7" stroke-linejoin="round" stroke-linecap="round"/>
<path d="M1705.9,84.9 A2.6,2.6 0 0 0 1711.1,84.9 Z" fill="#ced0d6"/>
<circle cx="1716.6" cy="68" r="6.2" fill="#2b2d30"/><circle cx="1716.6" cy="68" r="4.6" fill="#548af7"/>
<g fill="none" stroke="#ced0d6" stroke-width="1.7" stroke-linecap="round"><path d="M1700.10,118.60 C1702.67,118.00 1702.50,116.27 1707.80,116.80 C1713.10,117.33 1712.50,117.30 1716.00,120.20 C1719.50,123.10 1718.37,122.10 1718.30,125.50 C1718.23,128.90 1718.63,128.30 1715.80,130.40 C1712.97,132.50 1713.30,131.80 1709.80,131.80 C1706.30,131.80 1707.23,132.03 1705.30,130.40 C1703.37,128.77 1703.67,129.10 1704.00,126.90 C1704.33,124.70 1704.53,124.83 1706.30,123.80 C1708.07,122.77 1707.97,123.13 1709.30,123.80 C1710.63,124.47 1709.97,125.13 1710.30,125.80"/><path d="M1717.50,134.20 C1714.93,134.80 1715.10,136.53 1709.80,136.00 C1704.50,135.47 1705.10,135.50 1701.60,132.60 C1698.10,129.70 1699.23,130.70 1699.30,127.30 C1699.37,123.90 1698.97,124.50 1701.80,122.40 C1704.63,120.30 1704.30,121.00 1707.80,121.00 C1711.30,121.00 1710.37,120.77 1712.30,122.40 C1714.23,124.03 1713.93,123.70 1713.60,125.90 C1713.27,128.10 1713.07,127.97 1711.30,129.00 C1709.53,130.03 1709.63,129.67 1708.30,129.00 C1706.97,128.33 1707.63,127.67 1707.30,127.00"/></g>
<g fill="none" stroke="#ced0d6" stroke-width="1.7">
 <ellipse cx="1708.5" cy="169.3" rx="9.6" ry="3.6"/>
 <path d="M1698.9,169.3 L1698.9,183.5 C1698.9,188.3 1718.1,188.3 1718.1,183.5 L1718.1,169.3"/>
 <path d="M1698.9,174.2 C1698.9,178.8 1718.1,178.8 1718.1,174.2"/>
 <path d="M1698.9,179 C1698.9,183.6 1718.1,183.6 1718.1,179"/>
</g>
<rect x="19.8" y="1058.8" width="8.6" height="8.6" rx="1.6" fill="#25324d" stroke="#548af7" stroke-width="1.5"/>
<polyline points="121.50,1056.05 126.50,1060.80 121.50,1065.55" fill="none" stroke="#a8abb0" stroke-width="1.3" stroke-linecap="round" stroke-linejoin="round"/>
<polyline points="227.30,1056.05 232.30,1060.80 227.30,1065.55" fill="none" stroke="#a8abb0" stroke-width="1.3" stroke-linecap="round" stroke-linejoin="round"/>
<g fill="none" stroke="#a8abb0" stroke-width="1.4"><path d="M260.60,1061.50 L260.63,1061.79 L260.71,1062.10 L260.88,1062.43 L261.15,1062.81 L261.47,1063.23 L261.77,1063.70 L261.95,1064.17 L261.99,1064.61 L261.92,1065.03 L261.75,1065.40 L261.51,1065.73 L261.19,1066.00 L260.79,1066.18 L260.29,1066.26 L259.74,1066.24 L259.20,1066.17 L258.75,1066.13 L258.38,1066.15 L258.07,1066.23 L257.80,1066.35 L257.56,1066.52 L257.34,1066.75 L257.13,1067.06 L256.94,1067.48 L256.73,1067.97 L256.48,1068.46 L256.16,1068.85 L255.80,1069.11 L255.41,1069.26 L255.00,1069.30 L254.59,1069.26 L254.20,1069.11 L253.84,1068.85 L253.52,1068.46 L253.27,1067.97 L253.06,1067.48 L252.87,1067.06 L252.66,1066.75 L252.44,1066.52 L252.20,1066.35 L251.93,1066.23 L251.62,1066.15 L251.25,1066.13 L250.80,1066.17 L250.26,1066.24 L249.71,1066.26 L249.21,1066.18 L248.81,1066.00 L248.49,1065.73 L248.25,1065.40 L248.08,1065.03 L248.01,1064.61 L248.05,1064.17 L248.23,1063.70 L248.53,1063.23 L248.85,1062.81 L249.12,1062.43 L249.29,1062.10 L249.37,1061.79 L249.40,1061.50 L249.37,1061.21 L249.29,1060.90 L249.12,1060.57 L248.85,1060.19 L248.53,1059.77 L248.23,1059.30 L248.05,1058.83 L248.01,1058.39 L248.08,1057.97 L248.25,1057.60 L248.49,1057.27 L248.81,1057.00 L249.21,1056.82 L249.71,1056.74 L250.26,1056.76 L250.80,1056.83 L251.25,1056.87 L251.62,1056.85 L251.93,1056.77 L252.20,1056.65 L252.44,1056.48 L252.66,1056.25 L252.87,1055.94 L253.06,1055.52 L253.27,1055.03 L253.52,1054.54 L253.84,1054.15 L254.20,1053.89 L254.59,1053.74 L255.00,1053.70 L255.41,1053.74 L255.80,1053.89 L256.16,1054.15 L256.48,1054.54 L256.73,1055.03 L256.94,1055.52 L257.13,1055.94 L257.34,1056.25 L257.56,1056.48 L257.80,1056.65 L258.07,1056.77 L258.38,1056.85 L258.75,1056.87 L259.20,1056.83 L259.74,1056.76 L260.29,1056.74 L260.79,1056.82 L261.19,1057.00 L261.51,1057.27 L261.75,1057.60 L261.92,1057.97 L261.99,1058.39 L261.95,1058.83 L261.77,1059.30 L261.47,1059.77 L261.15,1060.19 L260.88,1060.57 L260.71,1060.90 L260.63,1061.21 Z"/><circle cx="255" cy="1061.5" r="2.6"/></g>
<g fill="none" stroke="#c4c6cb" stroke-width="1.4" stroke-linecap="round"><path d="M1564.9,1056.6 Q1569.5,1055.2 1574,1056.9"/><ellipse cx="1571" cy="1062.9" rx="7.1" ry="3.9"/><path d="M1567.9,1069.3 Q1572.5,1070.6 1577,1069.3"/><circle cx="1569.6" cy="1063.2" r="1.1"/></g>
<line x1="1563.9" y1="1070.2" x2="1578.2" y2="1055.6" stroke="#2b2d30" stroke-width="3.2" stroke-linecap="round"/><line x1="1563.9" y1="1070.2" x2="1578.2" y2="1055.6" stroke="#c4c6cb" stroke-width="1.4" stroke-linecap="round"/>
<g fill="none" stroke="#a8abb0" stroke-width="1.5" stroke-linejoin="round">
 <rect x="1695.8" y="1061.2" width="10.5" height="8.5" rx="1.5"/>
 <path d="M1702.8,1061 L1702.8,1057.8 C1702.8,1052.8 1710.5,1052.8 1710.5,1057.8 L1710.5,1059.2" stroke-linecap="round"/>
</g>
<rect x="1700.3" y="1064" width="1.5" height="3" fill="#a8abb0"/>
</svg>
</div>
<div style="position:absolute;left:1px;top:1px;width:1732px;height:1080px;border:1px solid rgba(22,23,26,0.4);border-radius:9px;pointer-events:none"></div>
<svg style="position:absolute;left:0;top:0" width="1734" height="1082"><path d="M1581,1082.5 L1602.5,1076 Q1604.5,1075.6 1605.2,1077 L1607.2,1082.5 Z" fill="#f26b35"/></svg>
</body></html>
